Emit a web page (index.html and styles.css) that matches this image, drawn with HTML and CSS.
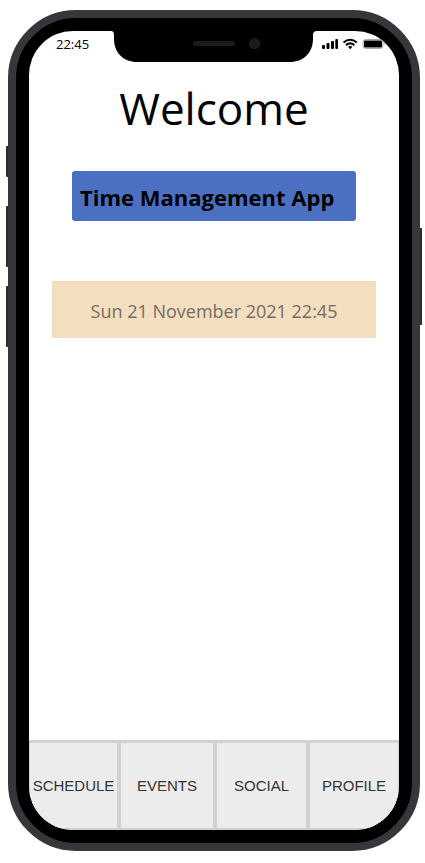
FILE: index.html
```html
<!DOCTYPE html>
<html lang="en">
<head>
<meta charset="utf-8">
<meta name="viewport" content="width=device-width, initial-scale=1">
<title>Time Management App</title>
<link rel="stylesheet" href="styles.css">
</head>
<body>
<div class="phone">
  <span class="key key-mute"></span>
  <span class="key key-up"></span>
  <span class="key key-down"></span>
  <span class="key key-power"></span>
  <div class="screen">
    <svg class="notch" width="206" height="31" viewBox="0 0 206 31" aria-hidden="true">
      <path d="M0 0H206Q202 0 202 4V8C202 22 192 31 179 31H26C13 31 3 22 3 8V4Q3 0 0 0Z" fill="#000"/>
      <rect x="82" y="10" width="42" height="5" rx="2.500" fill="#1b1b1b"/>
      <circle cx="143.500" cy="12.500" r="5.700" fill="#1b1b1b"/>
    </svg>
    <header class="status">
      <time>22:45</time>
      <svg class="indicators" width="64" height="12" viewBox="0 0 64 12" aria-hidden="true">
        <g fill="#000">
          <rect x="0" y="7" width="3" height="4" rx="1"/>
          <rect x="4.500" y="5" width="3" height="6" rx="1"/>
          <rect x="9" y="3" width="3" height="8" rx="1"/>
          <rect x="13.300" y="1" width="2.700" height="10" rx="1"/>
          <path d="M26 8.700Q28.200 7.200 30.400 8.700L28.200 11.200Z"/>
        </g>
        <g fill="none" stroke="#000" stroke-width="2">
          <path d="M21.500 4.500Q28.200-1 34.900 4.500"/>
          <path d="M24 7.100Q28.200 3.700 32.400 7.100"/>
        </g>
        <rect x="41" y="1.500" width="20" height="9" rx="2.500" fill="#fff" stroke="#aaa"/>
        <rect x="42" y="2.500" width="18" height="7" rx="1" fill="#000"/>
        <path d="M62.500 4.500Q64 6 62.500 7.500Z" fill="#999"/>
      </svg>
    </header>
    <main class="content">
      <h1 class="welcome">Welcome</h1>
      <h2 class="app-name">Time Management App</h2>
      <p class="date">Sun 21 November 2021 22:45</p>
    </main>
    <nav class="tabs">
      <button class="tab" type="button">SCHEDULE</button>
      <button class="tab" type="button">EVENTS</button>
      <button class="tab" type="button">SOCIAL</button>
      <button class="tab" type="button">PROFILE</button>
    </nav>
  </div>
</div>
</body>
</html>
```
FILE: styles.css
```css
* {
  box-sizing: border-box;
}

body {
  margin: 0;
  padding: 10px 5px 12px 8px;
  background: #fff;
  color: #000;
  font-family: "Open Sans", "Noto Sans", sans-serif;
}

.phone {
  position: relative;
  display: flex;
  min-height: calc(100vh - 22px);
  padding: 13px;
  border: 8px solid #37363b;
  border-radius: 68px;
  background: #000;
}

.key {
  position: absolute;
  left: -10px;
  width: 2px;
  border-radius: 1px 0 0 1px;
  background: #2b2c2b;
}

.key-mute {
  top: 128px;
  height: 31px;
}

.key-up {
  top: 188px;
  height: 61px;
}

.key-down {
  top: 268px;
  height: 61px;
}

.key-power {
  top: 210px;
  right: -10px;
  left: auto;
  height: 97px;
  border-radius: 0 1px 1px 0;
}

.screen {
  position: relative;
  display: flex;
  flex: 1;
  flex-direction: column;
  overflow: hidden;
  border-radius: 44px;
  background: #fff;
}

.notch {
  position: absolute;
  top: 0;
  left: 50%;
  margin-left: -103px;
}

.status {
  display: flex;
  justify-content: space-between;
  padding: 3px 13px 0 27px;
  font-size: 13px;
  line-height: 20px;
}

.indicators {
  margin-top: 4px;
}

.content {
  display: flex;
  flex: 1;
  flex-direction: column;
  padding: 22px 23px;
}

.welcome {
  margin: 0;
  font-size: 44px;
  font-weight: 400;
  line-height: 64px;
  text-align: center;
}

.app-name {
  margin: 31px 20px 0;
  padding: 2px 8px 0;
  border-radius: 3px;
  background: #4b70c1;
  font-size: 22px;
  font-weight: 700;
  line-height: 48px;
}

.date {
  margin: 60px 0 0;
  padding: 3px 0 0;
  background: #f3dec0;
  color: #756d63;
  font-size: 18px;
  line-height: 54px;
  text-align: center;
}

.tabs {
  display: grid;
  grid-template-columns: 87fr 92fr 89fr 88fr;
  gap: 4px;
  padding: 3px 1px 2px;
  background: #d1d1d1;
}

.tab {
  min-width: 0;
  height: 85px;
  padding: 0;
  border: 0;
  background: #ececec;
  color: #333;
  font-family: "Liberation Sans", sans-serif;
  font-size: 15px;
}
```
